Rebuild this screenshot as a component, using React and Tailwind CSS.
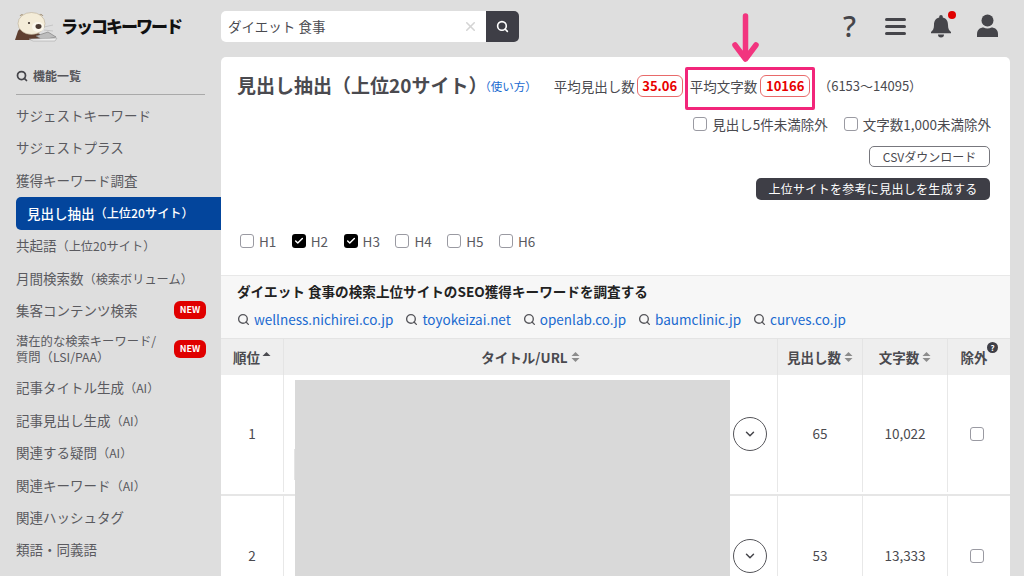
import { Search, X, ChevronDown, Check } from 'lucide-react'

const FONT = "font-['Noto_Sans_CJK_JP','Noto_Sans',sans-serif]"

const menuItems = [
  { label: 'サジェストキーワード' },
  { label: 'サジェストプラス' },
  { label: '獲得キーワード調査' },
  { label: '見出し抽出', sub: '（上位20サイト）', active: true },
  { label: '共起語', sub: '（上位20サイト）' },
  { label: '月間検索数', sub: '（検索ボリューム）' },
  { label: '集客コンテンツ検索', isNew: true },
  { label: '潜在的な検索キーワード/', line2: '質問（LSI/PAA）', isNew: true },
  { label: '記事タイトル生成', sub: '（AI）' },
  { label: '記事見出し生成', sub: '（AI）' },
  { label: '関連する疑問', sub: '（AI）' },
  { label: '関連キーワード', sub: '（AI）' },
  { label: '関連ハッシュタグ' },
  { label: '類語・同義語' },
]

const domains = ['wellness.nichirei.co.jp', 'toyokeizai.net', 'openlab.co.jp', 'baumclinic.jp', 'curves.co.jp']

const rows = [
  { rank: 1, count: 65, chars: '10,022' },
  { rank: 2, count: 53, chars: '13,333' },
]

function Logo() {
  return (
    <svg width="43" height="30" viewBox="0 0 43 30" className="shrink-0">
      <path d="M0 28 L3 19 C5 16 8 15 12 17 L25 22 L25 28 Z" fill="#5f3f30" />
      <path d="M5 4 C6 2 8 2 9 4 M24 3 C25 2 27 2 28 4" fill="#cdbfa8" stroke="#9a8a72" strokeWidth="0.8" />
      <ellipse cx="16.5" cy="11.5" rx="13.5" ry="11" fill="#f4ecd8" stroke="#b0a288" strokeWidth="0.5" />
      <ellipse cx="23" cy="15" rx="6" ry="5" fill="#fbf7ec" />
      <ellipse cx="23.5" cy="14.5" rx="3" ry="2.4" fill="#4a3a32" />
      <circle cx="14" cy="11" r="1.1" fill="#3a2e28" />
      <path d="M29 15 L38 13 M29 18 L38 19" stroke="#aaa" strokeWidth="0.5" />
      <path d="M21 24 L33 20 L41 25 L28 28 Z" fill="#bdbdbd" stroke="#777" strokeWidth="0.6" />
      <path d="M14 27 L42 26 L40 29 L18 29 Z" fill="#eeeeee" stroke="#999" strokeWidth="0.5" />
    </svg>
  )
}

function BoxCheck({ checked = false }) {
  if (checked) {
    return (
      <span className="w-[14px] h-[14px] rounded-[3px] bg-black flex items-center justify-center shrink-0">
        <Check size={10} color="#fff" strokeWidth={3.5} />
      </span>
    )
  }
  return <span className="w-[14px] h-[14px] rounded-[3px] border border-[#9a9aa2] bg-white shrink-0" />
}

function SortIcon({ up = true, down = true }) {
  return (
    <svg width="9" height="12" viewBox="0 0 9 12" className="shrink-0">
      {up && <path d="M4.5 1 L8.5 5 L0.5 5 Z" fill={down ? '#8c8c8c' : '#4a4a4f'} />}
      {down && <path d="M0.5 7 L8.5 7 L4.5 11 Z" fill="#8c8c8c" />}
    </svg>
  )
}

function Sidebar() {
  return (
    <aside className="w-[221px] shrink-0 pl-4">
      <div className="h-[38px] w-[189px] flex items-center gap-[5px] border-b border-[#a9a9a9] text-[12px] font-bold text-[#55555a]">
        <Search size={12} strokeWidth={3.5} color="#45454a" />
        機能一覧
      </div>
      <ul className="mt-[5px]">
        {menuItems.map((item) => {
          if (item.active) {
            return (
              <li key={item.label} className="h-[33px] pb-[1px] flex items-center bg-[#03459c] rounded-l-[5px] pl-[11px] text-[13.5px] font-medium text-white">
                {item.label}<span className="text-[12.2px]">{item.sub}</span>
              </li>
            )
          }
          return (
            <li
              key={item.label}
              className={`flex items-center justify-between pr-[15px] pb-[2px] text-[#5a5a5f] ${item.line2 ? 'h-[45px] text-[12.3px] leading-[16px]' : 'h-[32.4px] text-[13.5px]'}`}
            >
              <span>
                {item.label}
                {item.line2 && <br />}
                {item.line2}
                {item.sub && <span className="text-[12.2px]">{item.sub}</span>}
              </span>
              {item.isNew && (
                <span className="w-[32px] h-[18px] rounded-[6px] bg-[#e00000] text-white text-[9px] font-bold flex items-center justify-center">
                  NEW
                </span>
              )}
            </li>
          )
        })}
      </ul>
    </aside>
  )
}

function App() {
  return (
    <div className={`relative w-[1024px] h-[576px] overflow-hidden bg-[#dedede] text-[#4a4a4f] ${FONT}`}>
      {/* Header */}
      <header className="h-[57px] flex items-center">
        <div className="w-[221px] shrink-0 flex items-center pl-[15px] gap-[3px] -mt-[4px]">
          <Logo />
          <span className="text-[17px] leading-none font-black text-[#111] tracking-[-2px] -mt-[2px]">ラッコキーワード</span>
        </div>
        <div className="flex h-[31px] w-[298px] -mt-[4px]">
          <div className="flex-1 bg-white rounded-l-[5px] flex items-center justify-between pl-[7px] pr-[8px] text-[13.5px] text-[#4a4a4f]">
            ダイエット 食事
            <X size={15} color="#d4d4d4" strokeWidth={2.5} />
          </div>
          <div className="w-[33px] bg-[#3e3e46] rounded-r-[5px] flex items-center justify-center">
            <Search size={13} color="#fff" strokeWidth={3} />
          </div>
        </div>
        <div className="ml-auto flex items-center pr-[26px] -mt-[5px]">
          <span className="w-[15px] ml-[2px] -mt-[2px] text-[29px] leading-none font-medium text-[#45454a] font-['Noto_Sans',sans-serif]">?</span>
          <svg width="21" height="17" viewBox="0 0 21 17" className="ml-[27px]">
            <rect x="0" y="0" width="21" height="3" rx="1.5" fill="#45454a" />
            <rect x="0" y="7" width="21" height="3" rx="1.5" fill="#45454a" />
            <rect x="0" y="14" width="21" height="3" rx="1.5" fill="#45454a" />
          </svg>
          <div className="relative ml-[24px]">
            <svg width="22" height="24" viewBox="0 0 22 24">
              <path d="M11 1 a1.8 1.8 0 0 1 1.8 1.8 v.6 C16.6 4.2 18 7.4 18 11 c0 4 1.2 5.5 3 7 v1.2 H1 V18 c1.8-1.5 3-3 3-7 C4 7.4 5.4 4.2 9.2 3.4 v-.6 A1.8 1.8 0 0 1 11 1 Z" fill="#45454a" />
              <path d="M8 20.5 h6 a3 3 0 0 1-6 0 Z" fill="#45454a" />
            </svg>
            <span className="absolute -top-[3px] -right-[4px] w-[8px] h-[8px] rounded-full bg-[#e00000]" />
          </div>
          <svg width="21" height="24" viewBox="0 0 21 24" className="ml-[25px]">
            <circle cx="10.5" cy="6.5" r="6" fill="#45454a" />
            <path d="M0 23 v-3 c0-4.5 3.5-6.5 6.5-6.5 c1.2.6 2.6 1 4 1 s2.8-.4 4-1 c3 0 6.5 2 6.5 6.5 v3 Z" fill="#45454a" />
          </svg>
        </div>
      </header>

      <div className="flex">
        <Sidebar />

        {/* Main card */}
        <main className="relative w-[789px] h-[519px] bg-white rounded-t-[5px] overflow-hidden">
          <section className="h-[218px]">
            <div className="flex items-center pl-4 pr-5 h-[58px]">
              <h1 className="text-[19px] font-bold text-[#4a4a4f] leading-none -mt-[4px]">
                見出し抽出（上位20サイト<span className="[font-feature-settings:'halt']">）</span>
              </h1>
              <a className="text-[11.5px] text-[#1a6ad0] ml-[7px] mt-[2px]">
                <span className="[font-feature-settings:'halt']">（</span>使い方）
              </a>
              <div className="flex items-center text-[13.5px] ml-[17px] text-[#4a4a4f]">
                <span>平均見出し数</span>
                <span className="ml-[2px] h-[22px] w-[46px] justify-center border border-[#e86a6a] rounded-[6px] text-[#e80000] font-bold text-[13px] flex items-center">35.06</span>
                <span className="ml-[7px]">平均文字数</span>
                <span className="ml-[3px] h-[22px] w-[50px] justify-center border border-[#e86a6a] rounded-[6px] text-[#e80000] font-bold text-[13px] flex items-center">10166</span>
                <span className="ml-[8px] text-[13px]">（6153〜14095）</span>
              </div>
            </div>
            <div className="flex justify-end gap-4 pr-[19px] -mt-[1px] text-[13.5px] text-[#4a4a4f] leading-[20px]">
              <label className="flex items-center gap-[5px]"><BoxCheck />見出し5件未満除外</label>
              <label className="flex items-center gap-[5px]"><BoxCheck />文字数1,000未満除外</label>
            </div>
            <div className="flex flex-col items-end pr-[20px] mt-[12px] gap-[11px]">
              <button className="w-[121px] h-[21px] border border-[#77777d] rounded-[5px] text-[12px] text-[#4a4a4f] bg-white">CSVダウンロード</button>
              <button className="w-[234px] h-[22px] bg-[#3e3e46] rounded-[5px] text-[12px] text-white tracking-[0.3px]">上位サイトを参考に見出しを生成する</button>
            </div>
            <div className="flex items-center pl-[19px] mt-[31px] text-[13.5px] leading-[20px] text-[#5a5a5f]">
              {['H1', 'H2', 'H3', 'H4', 'H5', 'H6'].map((h) => (
                <label key={h} className="w-[51.8px] flex items-center gap-[5px]">
                  <BoxCheck checked={h === 'H2' || h === 'H3'} />
                  {h}
                </label>
              ))}
            </div>
          </section>

          <section className="h-[63px] bg-[#f7f7f7] border-t border-[#e8e8e8] pl-[16px] pt-[5px]">
            <p className="text-[13.6px] font-bold text-[#222] leading-[20px]">ダイエット 食事の検索上位サイトのSEO獲得キーワードを調査する</p>
            <div className="flex items-center gap-[12px] mt-[8px]">
              {domains.map((d) => (
                <span key={d} className="flex items-center gap-[4px] text-[13.5px] leading-[20px] text-[#1a6ad0]">
                  <Search size={13} color="#55555a" strokeWidth={2.5} />
                  {d}
                </span>
              ))}
            </div>
          </section>

          <div className="flex h-[37px] bg-[#eeeeee] border-t border-[#e4e4e4] text-[13.5px] font-bold text-[#4a4a4f]">
            <div className="w-[63px] border-r border-[#e4e4e4] flex items-center justify-center gap-[2px]">順位<SortIcon down={false} /></div>
            <div className="w-[494px] border-r border-[#e4e4e4] flex items-center justify-center gap-[3px]">タイトル/URL<SortIcon /></div>
            <div className="w-[85px] border-r border-[#e4e4e4] flex items-center justify-center gap-[3px]">見出し数<SortIcon /></div>
            <div className="w-[85px] border-r border-[#e4e4e4] flex items-center justify-center gap-[3px]">文字数<SortIcon /></div>
            <div className="flex-1 flex items-center justify-center relative pr-[10px]">
              除外
              <span className="absolute top-[3px] right-[12px] w-[11px] h-[11px] rounded-full bg-[#3e3e46] text-white text-[8px] font-bold flex items-center justify-center">?</span>
            </div>
          </div>

          {rows.map((r) => (
            <div key={r.rank} className={`flex h-[121px] border-b-[2px] border-[#e6e6e6] text-[13.5px] text-[#4a4a4f] ${r.rank === 1 ? 'pb-[2px]' : ''}`}>
              <div className="w-[63px] border-r border-[#e8e8e8] flex items-center justify-center">{r.rank}</div>
              <div className="w-[494px] border-r border-[#e8e8e8] flex items-center justify-end pr-[10px]">
                <span className="w-[34px] h-[34px] rounded-full border border-[#55555a] flex items-center justify-center shrink-0">
                  <ChevronDown size={14} color="#45454a" strokeWidth={2.5} />
                </span>
              </div>
              <div className="w-[85px] border-r border-[#e8e8e8] flex items-center justify-center">{r.count}</div>
              <div className="w-[85px] border-r border-[#e8e8e8] flex items-center justify-center">{r.chars}</div>
              <div className="flex-1 flex items-center justify-center pr-[5px]"><BoxCheck /></div>
            </div>
          ))}

          {/* Redaction block lies over the title cells of all rows */}
          <div className="absolute left-[74px] top-[323px] w-[435px] h-[196px] bg-[#d9d9d9]" />
          <div className="absolute left-[73px] top-[392px] w-px h-[31px] bg-[#e4e4e4]" />
        </main>
      </div>

      {/* Annotation laid over the screenshot */}
      <div className="absolute left-[685px] top-[67px] w-[130px] h-[43px] border-[3px] border-[#f2267a] rounded-[2px]" />
      <svg className="absolute left-[731px] top-[13px]" width="29" height="50" viewBox="0 0 29 50">
        <path d="M14.5 3 V46 M4 32 L14.5 46 L25 32" fill="none" stroke="#f2357f" strokeWidth="5.5" strokeLinecap="round" strokeLinejoin="round" />
      </svg>
    </div>
  )
}

export default App
